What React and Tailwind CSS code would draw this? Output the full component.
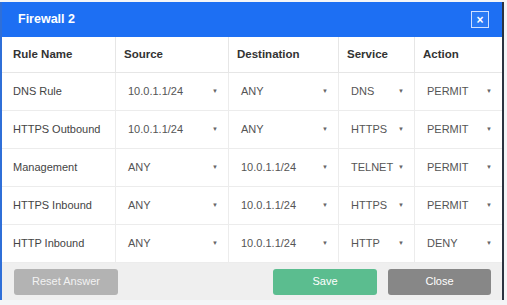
import React from 'react'

const rows = [
  { name: 'DNS Rule', source: '10.0.1.1/24', dest: 'ANY', service: 'DNS', action: 'PERMIT' },
  { name: 'HTTPS Outbound', source: '10.0.1.1/24', dest: 'ANY', service: 'HTTPS', action: 'PERMIT' },
  { name: 'Management', source: 'ANY', dest: '10.0.1.1/24', service: 'TELNET', action: 'PERMIT' },
  { name: 'HTTPS Inbound', source: 'ANY', dest: '10.0.1.1/24', service: 'HTTPS', action: 'PERMIT' },
  { name: 'HTTP Inbound', source: 'ANY', dest: '10.0.1.1/24', service: 'HTTP', action: 'DENY' },
]

function Select({ value }) {
  return (
    <div className="flex items-center justify-between pl-[12px] pr-[10px] h-full border-l border-[#ececec]">
      <span>{value}</span>
      <span className="text-[6px] text-[#666]">▼</span>
    </div>
  )
}

export default function App() {
  return (
    <div className="w-[507px] h-[305px] bg-[#f4f5f7] pt-[2px]" style={{ fontFamily: '"Liberation Sans", Arial, sans-serif' }}>
      <div className="w-[504px] border-l-2 border-[#2f6fd8] border-r-2 border-r-[#2b3340] bg-white">
        <div className="h-[35px] bg-[#1d6ff3] flex items-center justify-between pl-[16px] pr-[13px]">
          <span className="text-white font-bold text-[12.5px]">Firewall 2</span>
          <div className="w-[18px] h-[17px] border border-[#cfe0ff] bg-[#2a7af5] flex items-center justify-center text-white font-bold text-[12px] leading-none">×</div>
        </div>

        <div className="grid grid-cols-[113px_113px_110px_76px_88px]">
          <div className="h-[36px] flex items-center pl-[11px] font-bold text-[11.5px] text-[#333] border-b border-[#e6e6e6]">Rule Name</div>
          <div className="h-[36px] flex items-center pl-[8px] font-bold text-[11.5px] text-[#333] border-b border-l border-[#e6e6e6]">Source</div>
          <div className="h-[36px] flex items-center pl-[8px] font-bold text-[11.5px] text-[#333] border-b border-l border-[#e6e6e6]">Destination</div>
          <div className="h-[36px] flex items-center pl-[8px] font-bold text-[11.5px] text-[#333] border-b border-l border-[#e6e6e6]">Service</div>
          <div className="h-[36px] flex items-center pl-[8px] font-bold text-[11.5px] text-[#333] border-b border-l border-[#e6e6e6]">Action</div>

          {rows.map((r) => (
            <React.Fragment key={r.name}>
              <div className="h-[38px] flex items-center pl-[11px] text-[11px] text-[#444] border-b border-[#ececec]">{r.name}</div>
              <div className="h-[38px] text-[11px] text-[#555] border-b border-[#ececec]"><Select value={r.source} /></div>
              <div className="h-[38px] text-[11px] text-[#555] border-b border-[#ececec]"><Select value={r.dest} /></div>
              <div className="h-[38px] text-[11px] text-[#555] border-b border-[#ececec]"><Select value={r.service} /></div>
              <div className="h-[38px] text-[11px] text-[#555] border-b border-[#ececec]"><Select value={r.action} /></div>
            </React.Fragment>
          ))}
        </div>

        <div className="h-[37px] bg-[#efefef] flex items-center pl-[12px] pr-[11px] text-[11px] text-white">
          <button className="w-[104px] h-[26px] rounded-[3px] bg-[#b3b3b3] text-[#f2f2f2]">Reset Answer</button>
          <div className="flex-1" />
          <button className="w-[104px] h-[26px] rounded-[3px] bg-[#5bbd8f]">Save</button>
          <button className="w-[103px] h-[26px] rounded-[3px] bg-[#878787] ml-[11px]">Close</button>
        </div>
      </div>
    </div>
  )
}
